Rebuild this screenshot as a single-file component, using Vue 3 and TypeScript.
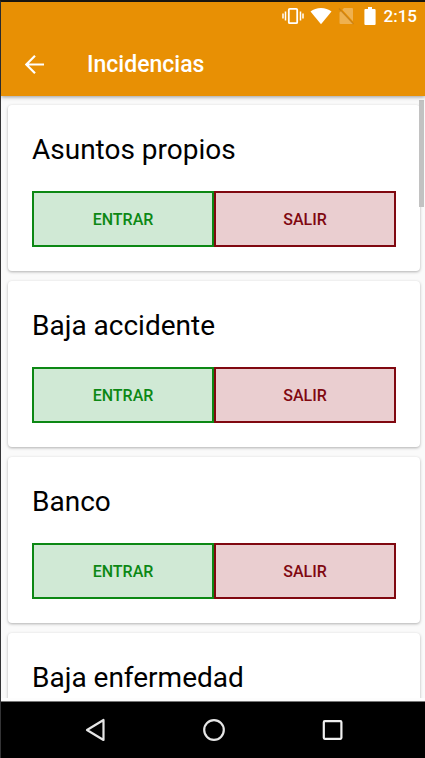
<script setup lang="ts">
import { ref } from 'vue'

interface Incident {
  id: number
  name: string
}

const incidents = ref<Incident[]>([
  { id: 1, name: 'Asuntos propios' },
  { id: 2, name: 'Baja accidente' },
  { id: 3, name: 'Banco' },
  { id: 4, name: 'Baja enfermedad' },
])
</script>

<template>
  <div class="screen">
    <header class="top">
      <div class="status">
        <svg width="22" height="18" viewBox="0 0 22 18" aria-hidden="true">
          <path d="M1 6.5v5M3.5 4.5v9M18.5 4.5v9M21 6.5v5" stroke="#fff" stroke-width="1.5" fill="none" />
          <rect x="6.8" y="1.8" width="8.4" height="14.4" rx="1" stroke="#fff" stroke-width="1.8" fill="none" />
        </svg>
        <svg class="wifi" width="22" height="18" viewBox="0 0 22 18" aria-hidden="true">
          <path d="M.5 4.6C3.4 2.2 7 .9 11 .9s7.600 1.300 10.500 3.700L11 17.300z" fill="#fff" />
        </svg>
        <svg class="sim" width="16" height="18" viewBox="0 0 16 18" aria-hidden="true">
          <path d="M6 1h8q1 0 1 1v12.200L4.300 2.700zM3.200 3.900 15 16.500l-.5.500H2.500q-1 0-1-1V5.600z" fill="#fff" fill-opacity=".3" />
          <path d="M1 1.500 15.500 17" stroke="#b87518" stroke-opacity=".6" stroke-width="1.200" />
        </svg>
        <svg class="battery" width="12" height="18" viewBox="0 0 12 18" aria-hidden="true">
          <path d="M4 0h4v2h2.600q1 0 1 1v14q0 1-1 1H1.400q-1 0-1-1V3q0-1 1-1H4z" fill="#fff" />
        </svg>
        <time class="clock">2:15</time>
      </div>
      <div class="toolbar">
        <button class="back" type="button" aria-label="Atrás">
          <svg width="20" height="20" viewBox="0 0 20 20" aria-hidden="true">
            <path d="M19 9.500H1.500M10 .8 1.300 9.500l8.700 8.700" fill="none" stroke="#fff" stroke-width="2.200" />
          </svg>
        </button>
        <h1>Incidencias</h1>
      </div>
    </header>

    <main class="content">
      <div class="list">
        <article v-for="item in incidents" :key="item.id" class="card">
          <h2>{{ item.name }}</h2>
          <div class="actions">
            <button class="action enter" type="button">ENTRAR</button>
            <button class="action leave" type="button">SALIR</button>
          </div>
        </article>
      </div>
      <div class="thumb"></div>
    </main>

    <nav class="system">
      <button type="button" aria-label="Volver">
        <svg width="24" height="24" viewBox="0 0 24 24" aria-hidden="true">
          <path d="M20.500 2v20L4 12z" fill="none" stroke="#e6e6e6" stroke-width="2.200" stroke-linejoin="round" />
        </svg>
      </button>
      <button type="button" aria-label="Inicio">
        <svg width="24" height="24" viewBox="0 0 24 24" aria-hidden="true">
          <circle cx="12" cy="12" r="9.800" fill="none" stroke="#e6e6e6" stroke-width="2.200" />
        </svg>
      </button>
      <button type="button" aria-label="Recientes">
        <svg width="24" height="24" viewBox="0 0 24 24" aria-hidden="true">
          <rect x="2.800" y="3.200" width="17.600" height="17.600" rx="1" fill="none" stroke="#f0f0f0" stroke-width="2.200" />
        </svg>
      </button>
    </nav>
  </div>
</template>

<style>
body {
  margin: 0;
}
</style>

<style scoped>
.screen {
  box-sizing: border-box;
  display: flex;
  flex-direction: column;
  height: 100vh;
  border-top: 2px solid #1a1712;
  border-left: 1px solid #343436;
  background: #fafafa;
  font-family: Roboto, "Noto Sans", sans-serif;
  color: #000;
}

button {
  margin: 0;
  padding: 0;
  border: 0;
  background: none;
  font: inherit;
  cursor: pointer;
}

svg {
  display: block;
}

.top {
  position: relative;
  z-index: 1;
  flex: none;
  background: #e89004;
  box-shadow: 0 1px 4px rgba(0, 0, 0, 0.4);
  color: #fff;
}

.status {
  display: flex;
  align-items: center;
  justify-content: flex-end;
  height: 28px;
  padding-right: 8px;
}

.wifi,
.sim {
  margin-left: 6px;
}

.battery {
  margin-left: 10px;
}

.clock {
  margin-left: 8px;
  font-size: 17px;
  font-weight: 500;
  line-height: 28px;
}

.toolbar {
  box-sizing: border-box;
  display: flex;
  align-items: center;
  gap: 42px;
  height: 66px;
  padding: 4px 0 0 24px;
}

.back {
  width: 20px;
  height: 20px;
}

h1 {
  margin: 0;
  font-size: 23px;
  font-weight: 500;
  line-height: 30px;
}

.content {
  position: relative;
  display: flex;
  flex: 1;
  flex-direction: column;
  min-height: 0;
  border-bottom: 3px solid #fdfdfd;
}

.list {
  display: flex;
  flex: 1;
  flex-direction: column;
  gap: 10px;
  min-height: 0;
  overflow-y: auto;
  padding: 9px 5px 0 7px;
  scrollbar-width: none;
}

.card {
  flex: none;
  padding: 24px;
  border-radius: 4px;
  background: #fff;
  box-shadow: 0 1px 3px rgba(0, 0, 0, 0.3);
}

h2 {
  margin: 0 0 20px;
  font-size: 28px;
  font-weight: 400;
  line-height: 42px;
}

.actions {
  display: flex;
}

.action {
  box-sizing: border-box;
  flex: 1;
  height: 56px;
  border: 2px solid;
  font-size: 16px;
  font-weight: 500;
}

.enter {
  border-color: #0c8814;
  background: #d0e9d5;
  color: #0c8814;
}

.leave {
  border-color: #800810;
  background: #eaced0;
  color: #800810;
}

.thumb {
  position: absolute;
  top: 4px;
  right: 1px;
  width: 5px;
  height: 107px;
  background: #c2c2c2;
}

.system {
  display: flex;
  flex: none;
  align-items: center;
  justify-content: center;
  gap: 95px;
  height: 56px;
  padding-left: 2px;
  border-top: 1px solid #777;
  background: #000;
}
</style>
